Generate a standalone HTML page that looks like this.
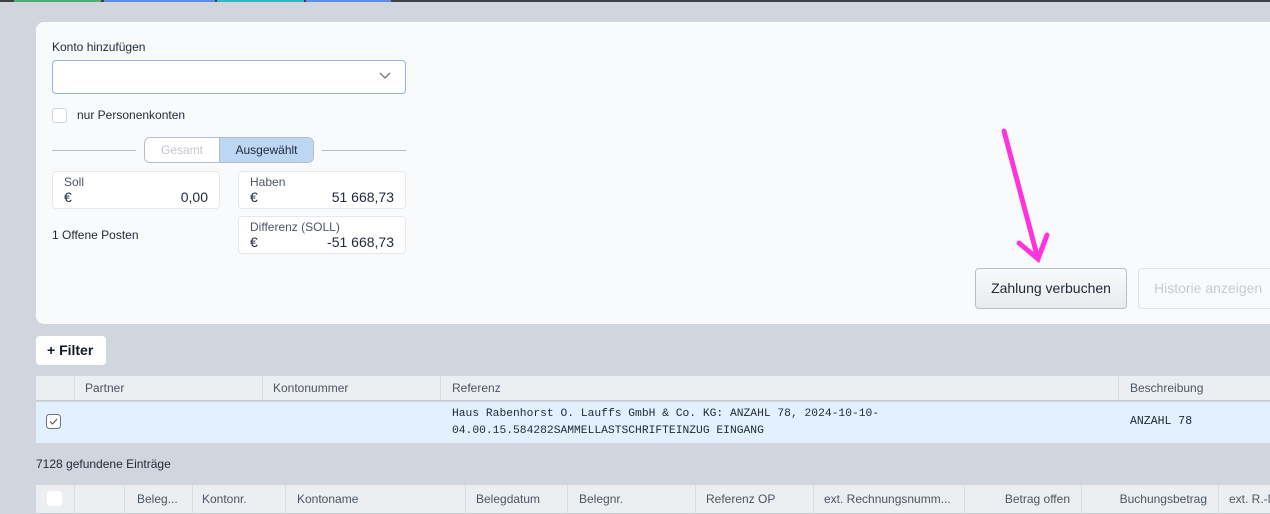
<!DOCTYPE html>
<html><head><meta charset="utf-8"><style>
*{box-sizing:border-box;margin:0;padding:0}
body{width:1270px;height:514px;overflow:hidden;background:#d1d5dd;font-family:"Liberation Sans",sans-serif;color:#374151;position:relative;font-size:12px}
.abs{position:absolute;white-space:nowrap}
.card{left:36px;top:22px;width:1260px;height:302px;background:#f9fafb;border-radius:8px}
.box{background:#fff;border:1px solid #e5e7eb;border-radius:4px}
.lbl{font-size:12px;color:#4b5563}
.val{font-size:14px;color:#1f2937}
.mono{font-family:"Liberation Mono",monospace;font-size:11.5px;color:#1f2937}
.th{font-size:12px;color:#4b5563;background:#eceef2}
.sep{position:absolute;top:0;bottom:0;width:1px;background:#d8dbe1}
</style></head><body>
<div class="abs" style="left:0;top:0;width:1270px;height:2px;background:#3f3f46"></div>
<div class="abs" style="left:14px;top:0;width:87px;height:2px;background:#4caf70"></div>
<div class="abs" style="left:104px;top:0;width:111px;height:2px;background:#5b8def"></div>
<div class="abs" style="left:217px;top:0;width:87px;height:2px;background:#30b8c8"></div>
<div class="abs" style="left:306px;top:0;width:85px;height:2px;background:#5b8def"></div>

<div class="abs card"></div>
<div class="abs" style="left:52px;top:40px;font-size:12px;color:#1f2937">Konto hinzufügen</div>
<div class="abs" style="left:52px;top:60px;width:354px;height:34px;background:#fff;border:1px solid #93b4e0;border-radius:4px"></div>
<svg class="abs" style="left:378px;top:71px" width="14" height="10"><path d="M2 2l5 5 5-5" fill="none" stroke="#6b7280" stroke-width="1.3"/></svg>
<div class="abs" style="left:52px;top:108px;width:15px;height:15px;background:#fff;border:1px solid #d1d5db;border-radius:3px"></div>
<div class="abs" style="left:77px;top:108px;font-size:12px;color:#1f2937">nur Personenkonten</div>
<div class="abs" style="left:52px;top:150px;width:84px;height:1px;background:#b8bcc4"></div>
<div class="abs" style="left:322px;top:150px;width:84px;height:1px;background:#b8bcc4"></div>
<div class="abs" style="left:144px;top:137px;width:170px;height:26px;border:1px solid #b8bcc4;border-radius:6px;overflow:hidden;display:flex">
<div style="width:74px;background:#fff;color:#c3c7ce;text-align:center;line-height:24px">Gesamt</div>
<div style="flex:1;background:#bcd6f3;color:#1f2937;text-align:center;line-height:24px;border-left:1px solid #b8bcc4">Ausgewählt</div></div>

<div class="abs box" style="left:52px;top:171px;width:168px;height:38px"></div>
<div class="abs lbl" style="left:64px;top:175px">Soll</div>
<div class="abs val" style="left:64px;top:189px">€</div>
<div class="abs val" style="left:120px;top:189px;width:88px;text-align:right">0,00</div>
<div class="abs box" style="left:238px;top:171px;width:168px;height:38px"></div>
<div class="abs lbl" style="left:250px;top:175px">Haben</div>
<div class="abs val" style="left:250px;top:189px">€</div>
<div class="abs val" style="left:290px;top:189px;width:104px;text-align:right">51 668,73</div>
<div class="abs box" style="left:238px;top:216px;width:168px;height:38px"></div>
<div class="abs lbl" style="left:250px;top:220px">Differenz (SOLL)</div>
<div class="abs val" style="left:250px;top:234px">€</div>
<div class="abs val" style="left:290px;top:234px;width:104px;text-align:right">-51 668,73</div>
<div class="abs" style="left:52px;top:228px;font-size:12px;color:#1f2937">1 Offene Posten</div>

<div class="abs" style="left:975px;top:268px;width:152px;height:41px;background:linear-gradient(#f9fafb,#e8eaee);border:1px solid #b9bdc5;border-radius:4px;text-align:center;line-height:39px;font-size:14px;color:#1f2937">Zahlung verbuchen</div>
<div class="abs" style="left:1138px;top:268px;width:150px;height:41px;border:1px solid #e2e4e8;border-radius:4px;line-height:39px;padding-left:15px;font-size:14px;color:#c8ccd2">Historie anzeigen</div>
<svg class="abs" style="left:0;top:0" width="1270" height="514"><g stroke="#ff33dd" stroke-width="5" stroke-linecap="round" fill="none"><path d="M1004 131L1038 259"/><path d="M1019 243L1038 259L1047 235"/></g></svg>

<div class="abs" style="left:36px;top:336px;width:70px;height:29px;background:#fff;border-radius:4px;font-size:14px;font-weight:bold;color:#111827;line-height:29px;padding-left:11px">+&nbsp;Filter</div>

<div class="abs th" style="left:36px;top:376px;width:1240px;height:25px;border-bottom:1px solid #c8ccd3">
<div class="sep" style="left:38px"></div><div class="sep" style="left:226px"></div><div class="sep" style="left:404px"></div><div class="sep" style="left:1082px"></div>
<span class="abs" style="left:49px;top:5px">Partner</span><span class="abs" style="left:237px;top:5px">Kontonummer</span><span class="abs" style="left:416px;top:5px">Referenz</span><span class="abs" style="left:1094px;top:5px">Beschreibung</span></div>
<div class="abs" style="left:36px;top:402px;width:1240px;height:41px;background:#e3f0fd"></div>
<svg class="abs" style="left:46px;top:414px" width="16" height="16"><rect x="0.5" y="0.5" width="14" height="14" rx="3" fill="#fff" stroke="#6b7280"/><path d="M4 7.5l2.5 2.5 4.5-5" fill="none" stroke="#4b5563" stroke-width="1.1"/></svg>
<div class="abs mono" style="left:452px;top:406px;line-height:17px;font-size:11.3px">Haus Rabenhorst O. Lauffs GmbH &amp; Co. KG: ANZAHL 78, 2024-10-10-<br>04.00.15.584282SAMMELLASTSCHRIFTEINZUG EINGANG</div>
<div class="abs mono" style="left:1130px;top:415px">ANZAHL 78</div>

<div class="abs" style="left:36px;top:457px;font-size:12px;color:#1f2937">7128 gefundene Einträge</div>

<div class="abs th" style="left:36px;top:485px;width:1240px;height:29px;border-bottom:1px solid #c8ccd3">
<div class="abs" style="left:11px;top:6px;width:15px;height:15px;background:#fff;border-radius:3px"></div>
<div class="sep" style="left:38px"></div><div class="sep" style="left:88px"></div><div class="sep" style="left:156px"></div><div class="sep" style="left:249px"></div><div class="sep" style="left:429px"></div><div class="sep" style="left:531px"></div><div class="sep" style="left:659px"></div><div class="sep" style="left:777px"></div><div class="sep" style="left:928px"></div><div class="sep" style="left:1045px"></div><div class="sep" style="left:1182px"></div>
<span class="abs" style="left:101px;top:7px">Beleg...</span>
<span class="abs" style="left:166px;top:7px">Kontonr.</span>
<span class="abs" style="left:261px;top:7px">Kontoname</span>
<span class="abs" style="left:440px;top:7px">Belegdatum</span>
<span class="abs" style="left:543px;top:7px">Belegnr.</span>
<span class="abs" style="left:670px;top:7px">Referenz OP</span>
<span class="abs" style="left:788px;top:7px">ext. Rechnungsnumm...</span>
<span class="abs" style="left:928px;top:7px;width:106px;text-align:right">Betrag offen</span>
<span class="abs" style="left:1045px;top:7px;width:126px;text-align:right">Buchungsbetrag</span>
<span class="abs" style="left:1193px;top:7px">ext. R.-N</span></div>
</body></html>
